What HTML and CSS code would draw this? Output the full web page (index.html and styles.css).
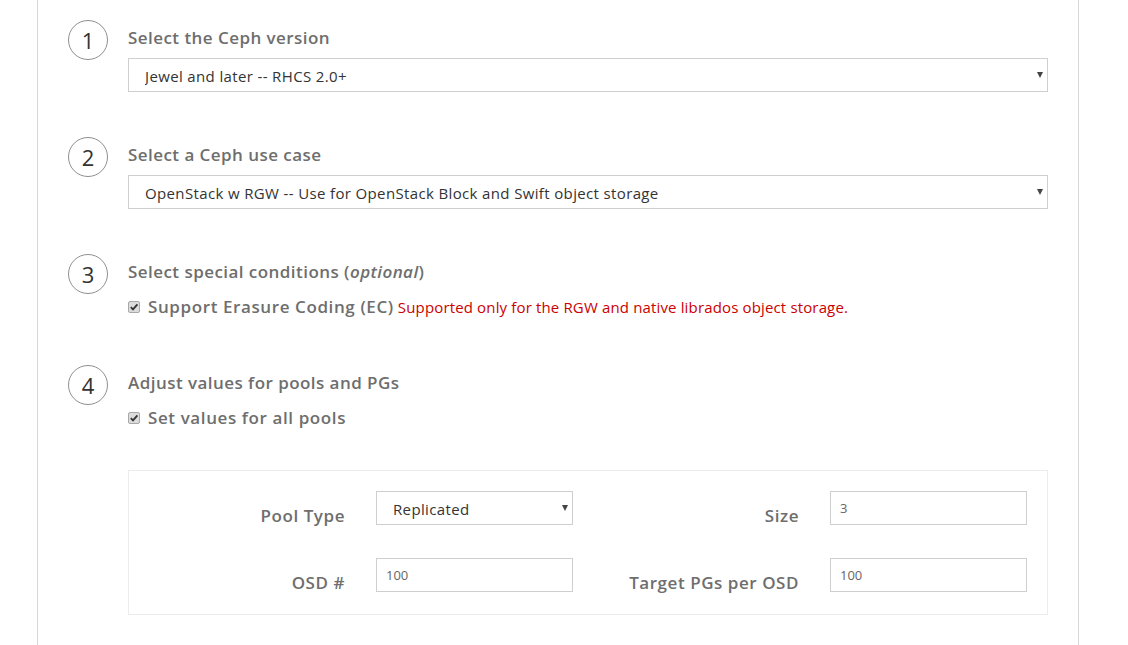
FILE: index.html
```html
<!DOCTYPE html>
<html>
<head>
<meta charset="utf-8">
<link rel="stylesheet" href="styles.css">
</head>
<body>
<div class="page">
  <div class="step step-select">
    <div class="num">1</div>
    <div class="step-body">
      <div class="heading">Select the Ceph version</div>
      <div class="select-wrap">
        <select class="select"><option>Jewel and later -- RHCS 2.0+</option></select>
      </div>
    </div>
  </div>

  <div class="step step-select">
    <div class="num">2</div>
    <div class="step-body">
      <div class="heading">Select a Ceph use case</div>
      <div class="select-wrap">
        <select class="select"><option>OpenStack w RGW -- Use for OpenStack Block and Swift object storage</option></select>
      </div>
    </div>
  </div>

  <div class="step step-check">
    <div class="num">3</div>
    <div class="step-body">
      <div class="heading">Select special conditions (<em>optional</em>)</div>
      <div class="check-row">
        <span class="checkbox"><svg width="10" height="10" viewBox="0 0 10 10"><path d="M1.8 5.2 L4 7.4 L8.4 2.4" fill="none" stroke="#333" stroke-width="1.8"/></svg></span>
        <span class="check-label">Support Erasure Coding (EC)</span>
        <span class="warn">Supported only for the RGW and native librados object storage.</span>
      </div>
    </div>
  </div>

  <div class="step">
    <div class="num">4</div>
    <div class="step-body">
      <div class="heading">Adjust values for pools and PGs</div>
      <div class="check-row">
        <span class="checkbox"><svg width="10" height="10" viewBox="0 0 10 10"><path d="M1.8 5.2 L4 7.4 L8.4 2.4" fill="none" stroke="#333" stroke-width="1.8"/></svg></span>
        <span class="check-label">Set values for all pools</span>
      </div>
      <div class="panel">
        <div class="field-label">Pool Type</div>
        <div class="select-wrap small">
          <select class="select small"><option>Replicated</option></select>
        </div>
        <div class="field-label">Size</div>
        <input class="input" type="text" value="3">
        <div class="field-label">OSD #</div>
        <input class="input" type="text" value="100">
        <div class="field-label">Target PGs per OSD</div>
        <input class="input" type="text" value="100">
      </div>
    </div>
  </div>
</div>
</body>
</html>
```

FILE: styles.css
```css
html, body {
  margin: 0;
  padding: 0;
  background: #fff;
}

body {
  font-family: "Open Sans", "Liberation Sans", sans-serif;
  color: #333;
  overflow: hidden;
}

.page {
  margin-left: 37px;
  width: 1042px;
  min-height: 645px;
  border-left: 1px solid #d8d8d8;
  border-right: 1px solid #d8d8d8;
  padding: 20px 0 0 30px;
  box-sizing: border-box;
}

.step {
  display: flex;
  align-items: flex-start;
  gap: 20px;
}

.step-select {
  margin-bottom: 45px;
}

.step-check {
  margin-bottom: 46px;
}

.num {
  flex: none;
  width: 40px;
  height: 40px;
  box-sizing: border-box;
  border: 1px solid #8f8f8f;
  border-radius: 50%;
  display: flex;
  align-items: center;
  justify-content: center;
  font-size: 22px;
  color: #333;
  line-height: 1;
}

.step-body {
  width: 920px;
  padding-top: 6px;
}

.heading {
  font-size: 17px;
  font-weight: 600;
  color: #6e6e6e;
  line-height: 24px;
  letter-spacing: 0.45px;
  margin-bottom: 8px;
}

.heading em {
  font-style: italic;
}

.select-wrap {
  position: relative;
}

.select-wrap::after {
  content: "";
  position: absolute;
  right: 5px;
  top: 14px;
  border-left: 3px solid transparent;
  border-right: 3px solid transparent;
  border-top: 6px solid #444;
}

.select {
  -webkit-appearance: none;
  appearance: none;
  width: 100%;
  height: 34px;
  box-sizing: border-box;
  border: 1px solid #cfcfcf;
  border-radius: 0;
  background: #fff;
  padding: 1px 0 0 16px;
  font-family: "Open Sans", "Liberation Sans", sans-serif;
  font-size: 15px;
  letter-spacing: 0.36px;
  color: #333;
  display: block;
}

.select.small {
  width: 197px;
}

.select-wrap.small {
  width: 197px;
}

.check-row {
  display: flex;
  align-items: center;
  margin-top: 11px;
  line-height: 24px;
}

.checkbox {
  flex: none;
  width: 12px;
  height: 12px;
  box-sizing: border-box;
  border: 1px solid #a8a8a8;
  border-radius: 2px;
  background: #dcdcdc;
  display: flex;
  align-items: center;
  justify-content: center;
  margin-right: 8px;
}

.checkbox svg {
  display: block;
}

.check-label {
  font-size: 17px;
  font-weight: 600;
  color: #6e6e6e;
  letter-spacing: 0.6px;
}

.warn {
  font-size: 15px;
  color: #cc0000;
  letter-spacing: 0.15px;
  margin-left: 4px;
}

.panel {
  margin-top: 40px;
  border: 1px solid #ececec;
  padding: 20px 20px 19px 21px;
  display: grid;
  grid-template-columns: 195px 197px 195px 197px;
  column-gap: 31px;
  row-gap: 30px;
}

.field-label {
  text-align: right;
  font-size: 17px;
  font-weight: 600;
  color: #6e6e6e;
  line-height: 24px;
  letter-spacing: 0.55px;
  padding-top: 13px;
}

.input {
  width: 197px;
  height: 34px;
  box-sizing: border-box;
  border: 1px solid #cfcfcf;
  border-radius: 0;
  padding: 0 0 0 9px;
  font-family: "Open Sans", "Liberation Sans", sans-serif;
  font-size: 13px;
  color: #666;
  outline: none;
}
```
